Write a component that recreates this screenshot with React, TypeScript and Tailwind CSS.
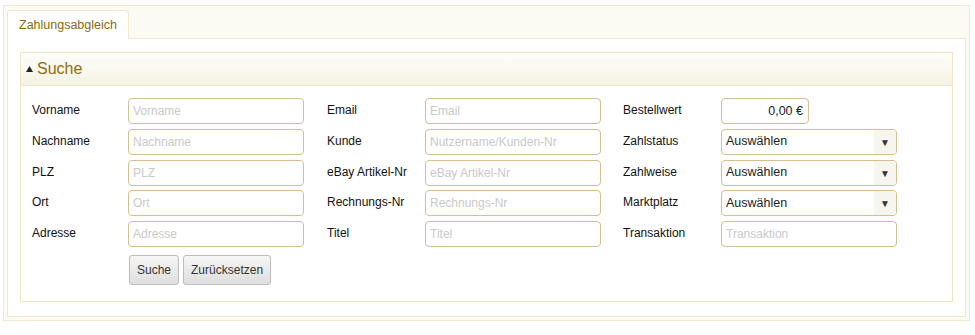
import React from "react";

type Field = { label: string; placeholder?: string; kind?: "input" | "select" | "money" };

const col1: Field[] = [
  { label: "Vorname", placeholder: "Vorname" },
  { label: "Nachname", placeholder: "Nachname" },
  { label: "PLZ", placeholder: "PLZ" },
  { label: "Ort", placeholder: "Ort" },
  { label: "Adresse", placeholder: "Adresse" },
];

const col2: Field[] = [
  { label: "Email", placeholder: "Email" },
  { label: "Kunde", placeholder: "Nutzername/Kunden-Nr" },
  { label: "eBay Artikel-Nr", placeholder: "eBay Artikel-Nr" },
  { label: "Rechnungs-Nr", placeholder: "Rechnungs-Nr" },
  { label: "Titel", placeholder: "Titel" },
];

const col3: Field[] = [
  { label: "Bestellwert", kind: "money" },
  { label: "Zahlstatus", kind: "select" },
  { label: "Zahlweise", kind: "select" },
  { label: "Marktplatz", kind: "select" },
  { label: "Transaktion", placeholder: "Transaktion" },
];

function Control({ field }: { field: Field }) {
  if (field.kind === "money") {
    return (
      <div className="flex h-[26px] w-[88px] items-center justify-end rounded-[4px] border border-[#d6bf8f] bg-white pr-[5px] text-[12.5px] text-[#222]">
        0,00 €
      </div>
    );
  }
  if (field.kind === "select") {
    return (
      <div className="flex h-[26px] w-[176px] items-center overflow-hidden rounded-[4px] border border-[#d6bf8f] bg-white text-[12.5px] text-[#222]">
        <span className="flex-1 pl-[4px]">Auswählen</span>
        <span className="flex h-full w-[22px] items-center justify-center bg-[#f7f5ef] pt-[1px] text-[10px] text-[#333]">▼</span>
      </div>
    );
  }
  return (
    <input
      placeholder={field.placeholder}
      className="h-[26px] w-[176px] rounded-[4px] border border-[#d6bf8f] bg-white px-[4px] text-[12px] outline-none placeholder:text-[#c9c9c9]"
    />
  );
}

function Column({ fields, labelWidth, children }: { fields: Field[]; labelWidth: string; children?: React.ReactNode }) {
  return (
    <div className="flex flex-col gap-[4.75px]">
      {fields.map((f) => (
        <div key={f.label} className="flex items-center">
          <label className={`${labelWidth} -mt-[2px] text-[12px] text-[#111]`}>{f.label}</label>
          <Control field={f} />
        </div>
      ))}
      {children}
    </div>
  );
}

export default function App() {
  return (
    <div className="bg-white pl-[3px] pt-[5px] font-['Liberation_Sans',Arial,sans-serif]">
      <div className="w-[967px] border border-[#efe9cf] bg-[#fbfaf3] p-[3px]">
        <div className="flex pt-[1px]">
          <div className="relative z-10 -mb-px flex h-[29px] items-center rounded-t-[3px] border border-b-0 border-[#efe8cc] bg-white px-[11px] text-[12.5px] text-[#8a6a12]">
            Zahlungsabgleich
          </div>
        </div>
        <div className="border border-[#efe8cc] bg-white px-[12px] pb-[14px] pt-[13px]">
          <div className="border border-[#efe6c6]">
            <div className="flex h-[33px] items-center gap-[2px] border-b border-[#efe6c6] bg-gradient-to-b from-[#fefefc] to-[#f5f2e4] pl-[5px] text-[16px] text-[#8f6d0b]">
              <svg width="7" height="6" viewBox="0 0 7 6" className="-mt-[1px]">
                <path d="M3.5 0 L7 6 L0 6 Z" fill="#222" />
              </svg>
              <span className="ml-[2px]">Suche</span>
            </div>
            <div className="flex pb-[16px] pl-[11px] pt-[12px]">
              <div className="w-[295px]">
                <Column fields={col1} labelWidth="w-[96px]">
                  <div className="mt-[3px] flex gap-[4px] pl-[97px]">
                    <button className="h-[30px] rounded-[3px] border border-[#bcbcbc] bg-gradient-to-b from-[#f6f6f6] to-[#dedede] px-[7px] text-[12px] text-[#333]">
                      Suche
                    </button>
                    <button className="h-[30px] rounded-[3px] border border-[#bcbcbc] bg-gradient-to-b from-[#f6f6f6] to-[#dedede] px-[7px] text-[12px] text-[#333]">
                      Zurücksetzen
                    </button>
                  </div>
                </Column>
              </div>
              <div className="w-[296px]">
                <Column fields={col2} labelWidth="w-[98px]" />
              </div>
              <div>
                <Column fields={col3} labelWidth="w-[98px]" />
              </div>
            </div>
          </div>
        </div>
      </div>
    </div>
  );
}
